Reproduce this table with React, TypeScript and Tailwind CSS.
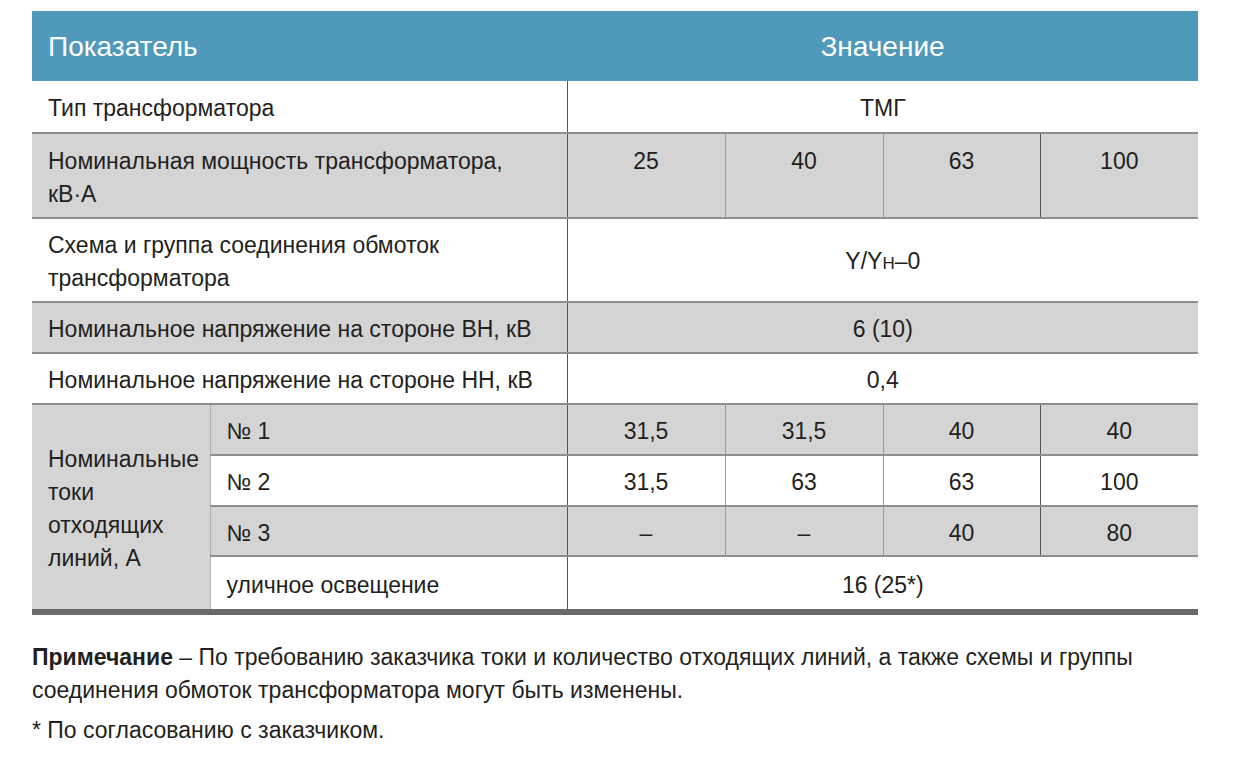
import React from "react";

const font = { fontFamily: '"Liberation Sans", Arial, sans-serif' };

export default function App() {
  const hb = "border-b-2 border-[#8e8e8e]";
  const vl = "border-l border-[#555]";
  const vs = "border-l border-[#9a9a9a]";
  return (
    <div className="w-[1239px] h-[765px] bg-white text-[#231f20] overflow-hidden" style={font}>
      <div className="pt-[11px] pl-[32px]">
        <table className="border-collapse table-fixed w-[1166px] text-[23px] leading-[33px]">
          <colgroup>
            <col className="w-[178px]" />
            <col className="w-[357px]" />
            <col className="w-[158px]" />
            <col className="w-[158px]" />
            <col className="w-[157px]" />
            <col className="w-[158px]" />
          </colgroup>
          <tbody>
            <tr className="h-[70px] bg-[#4f9aba] text-white text-[28px]">
              <td colSpan={2} className="pl-4 align-middle">Показатель</td>
              <td colSpan={4} className="text-center align-middle">Значение</td>
            </tr>
            <tr className={`h-[52px] ${hb}`}>
              <td colSpan={2} className="pl-4 pt-[4px] align-middle">Тип трансформатора</td>
              <td colSpan={4} className={`text-center pt-[4px] align-middle ${vl}`}>ТМГ</td>
            </tr>
            <tr className={`h-[85px] bg-[#d4d4d5] ${hb}`}>
              <td colSpan={2} className="pl-4 pt-[4px] align-middle whitespace-nowrap">Номинальная мощность трансформатора,<br />кВ·А</td>
              <td className={`text-center align-top pt-[11px] ${vl}`}>25</td>
              <td className={`text-center align-top pt-[11px] ${vs}`}>40</td>
              <td className={`text-center align-top pt-[11px] ${vs}`}>63</td>
              <td className={`text-center align-top pt-[11px] ${vl}`}>100</td>
            </tr>
            <tr className={`h-[84px] ${hb}`}>
              <td colSpan={2} className="pl-4 pt-[4px] align-middle whitespace-nowrap">Схема и группа соединения обмоток<br />трансформатора</td>
              <td colSpan={4} className={`text-center pt-[4px] align-middle ${vl}`}>Y/Y<span className="text-[17px]">Н</span>–0</td>
            </tr>
            <tr className={`h-[51px] bg-[#d4d4d5] ${hb}`}>
              <td colSpan={2} className="pl-4 pt-[4px] align-middle whitespace-nowrap">Номинальное напряжение на стороне ВН, кВ</td>
              <td colSpan={4} className={`text-center pt-[4px] align-middle ${vl}`}>6 (10)</td>
            </tr>
            <tr className={`h-[51px] ${hb}`}>
              <td colSpan={2} className="pl-4 pt-[4px] align-middle whitespace-nowrap">Номинальное напряжение на стороне НН, кВ</td>
              <td colSpan={4} className={`text-center pt-[4px] align-middle ${vl}`}>0,4</td>
            </tr>
            <tr className={`h-[51px] bg-[#d4d4d5] ${hb}`}>
              <td rowSpan={4} className="pl-4 pt-[4px] align-middle bg-[#d4d4d5] border-b-[6px] border-[#6a6a6a] whitespace-nowrap">Номинальные<br />токи<br />отходящих<br />линий, А</td>
              <td className="pl-4 pt-[4px] align-middle border-l border-[#b0b0b0]">№ 1</td>
              <td className={`text-center pt-[4px] align-middle ${vl}`}>31,5</td>
              <td className={`text-center pt-[4px] align-middle ${vs}`}>31,5</td>
              <td className={`text-center pt-[4px] align-middle ${vs}`}>40</td>
              <td className={`text-center pt-[4px] align-middle ${vl}`}>40</td>
            </tr>
            <tr className={`h-[51px] bg-white ${hb}`}>
              <td className="pl-4 pt-[4px] align-middle border-l border-[#b0b0b0]">№ 2</td>
              <td className={`text-center pt-[4px] align-middle ${vl}`}>31,5</td>
              <td className={`text-center pt-[4px] align-middle ${vs}`}>63</td>
              <td className={`text-center pt-[4px] align-middle ${vs}`}>63</td>
              <td className={`text-center pt-[4px] align-middle ${vl}`}>100</td>
            </tr>
            <tr className={`h-[50px] bg-[#d4d4d5] ${hb}`}>
              <td className="pl-4 pt-[4px] align-middle border-l border-[#b0b0b0]">№ 3</td>
              <td className={`text-center pt-[4px] align-middle ${vl}`}>–</td>
              <td className={`text-center pt-[4px] align-middle ${vs}`}>–</td>
              <td className={`text-center pt-[4px] align-middle ${vs}`}>40</td>
              <td className={`text-center pt-[4px] align-middle ${vl}`}>80</td>
            </tr>
            <tr className="h-[56px] bg-white border-b-[6px] border-[#6a6a6a]">
              <td className="pl-4 pt-[4px] align-middle border-l border-[#b0b0b0]">уличное освещение</td>
              <td colSpan={4} className={`text-center pt-[4px] align-middle ${vl}`}>16 (25*)</td>
            </tr>
          </tbody>
        </table>
      </div>
      <div className="pl-[32px] pt-[26px] text-[23px] leading-[33px]">
        <p className="whitespace-nowrap">
          <span className="font-bold">Примечание</span> – По требованию заказчика токи и количество отходящих линий, а также схемы и группы
        </p>
        <p className="whitespace-nowrap">соединения обмоток трансформатора могут быть изменены.</p>
        <p className="mt-[7px] whitespace-nowrap">* По согласованию с заказчиком.</p>
      </div>
    </div>
  );
}
